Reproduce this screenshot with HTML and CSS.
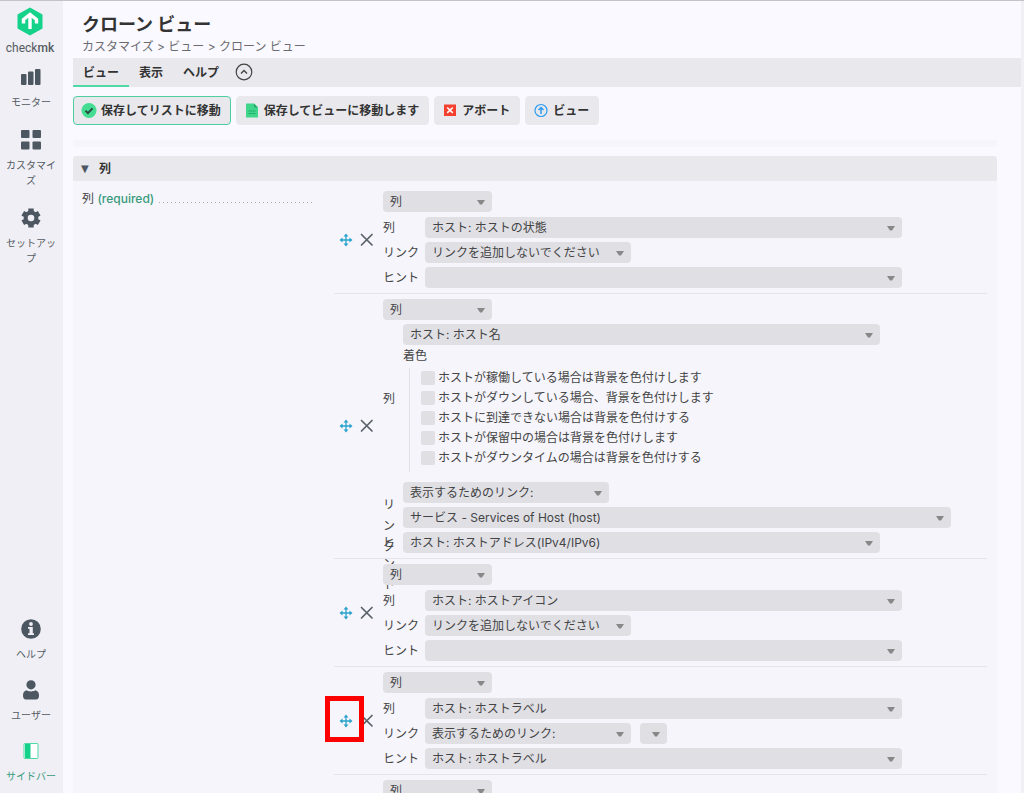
FILE: index.html
```html
<!DOCTYPE html>
<html lang="ja">
<head>
    <meta charset="UTF-8">
    <meta name="viewport" content="width=device-width, initial-scale=1.0">
    <title>クローン ビュー</title>
    <link rel="stylesheet" href="styles.css">
</head>
<body>
    <!-- Shared icons -->
    <svg class="icon-defs" aria-hidden="true">
        <symbol id="icon-move" viewBox="0 0 14 14">
            <path d="M7 2v10M2 7h10" stroke="#28a2cc" stroke-width="1.3" fill="none"/>
            <path d="M7 .5l2.4 3H4.6zM7 13.5l2.4-3H4.6zM.5 7l3-2.4v4.8zM13.500 7l-3-2.400v4.800z" fill="#28a2cc"/>
        </symbol>
        <symbol id="icon-close" viewBox="0 0 14 14">
            <path d="M1.500 1.500l10.500 10.500M12 1.500l-10.500 10.500" stroke="#5a6068" stroke-width="1.700" stroke-linecap="round" fill="none"/>
        </symbol>
    </svg>

    <div class="page">
        <!-- Side navigation -->
        <nav class="sidebar">
            <a href="#" class="logo">
                <svg width="26" height="29" viewBox="0 0 26 29">
                    <path d="M13 .5l12.500 7v14L13 28.500.5 21.500v-14z" fill="#15d28b"/>
                    <path d="M13 22V8M6.500 16.500v-4L13 7.500l6.500 5v4" fill="none" stroke="#fff" stroke-width="3.400"/>
                </svg>
                <span>check<b>mk</b></span>
            </a>
            <div class="nav-group">
                <a href="#" class="nav-item">
                    <svg width="20" height="20" viewBox="0 0 20 20" fill="#4d5761">
                        <rect x="0" y="7" width="5.500" height="11" rx="1"/>
                        <rect x="7" y="4.500" width="5.500" height="13.500" rx="1"/>
                        <rect x="14" y="2" width="5.500" height="16" rx="1"/>
                    </svg>
                    モニター
                </a>
                <a href="#" class="nav-item">
                    <svg width="20" height="20" viewBox="0 0 20 20" fill="#4d5761">
                        <rect x="0" y="0" width="8.500" height="8" rx="1"/>
                        <rect x="11.500" y="0" width="8.500" height="8" rx="1"/>
                        <rect x="0" y="11.500" width="8.500" height="8" rx="1"/>
                        <rect x="11.500" y="11.500" width="8.500" height="8" rx="1"/>
                    </svg>
                    カスタマイズ
                </a>
                <a href="#" class="nav-item">
                    <svg width="20" height="20" viewBox="0 0 20 20">
                        <g stroke="#4d5761" stroke-width="5.400" stroke-linejoin="round">
                            <path d="M10 .5v19M1.800 5.250l16.400 9.500M18.200 5.250l-16.400 9.500"/>
                        </g>
                        <circle cx="10" cy="10" r="7.400" fill="#4d5761"/>
                        <circle cx="10" cy="10" r="3.300" fill="#efeff5"/>
                    </svg>
                    セットアップ
                </a>
            </div>
            <div class="nav-group nav-bottom">
                <a href="#" class="nav-item">
                    <svg width="20" height="20" viewBox="0 0 20 20">
                        <circle cx="10" cy="10" r="9.800" fill="#4d5761"/>
                        <circle cx="10" cy="5" r="1.900" fill="#efeff5"/>
                        <path d="M7 8h4.800v6.200H13V16H7v-1.800h1.500V9.800H7z" fill="#efeff5"/>
                    </svg>
                    ヘルプ
                </a>
                <a href="#" class="nav-item">
                    <svg width="20" height="20" viewBox="0 0 20 20" fill="#4d5761">
                        <circle cx="10" cy="4.800" r="4.600"/>
                        <path d="M5.500 10.200c2.500 1.600 6.500 1.600 9 0 2.300.5 3.500 2.500 3.500 5.300 0 2.500-1 3.900-3 3.900H5c-2 0-3-1.400-3-3.900 0-2.800 1.200-4.800 3.500-5.300z"/>
                    </svg>
                    ユーザー
                </a>
                <a href="#" class="nav-item active">
                    <svg width="20" height="20" viewBox="0 0 20 20">
                        <rect x="3" y="2.500" width="14" height="15" rx="1" fill="#fff" stroke="#4fd9a4"/>
                        <path d="M4 3h5.500v14H4z" fill="#15d28b"/>
                    </svg>
                    サイドバー
                </a>
            </div>
        </nav>

        <main class="main">
            <header class="page-header">
                <h1>クローン ビュー</h1>
                <div class="breadcrumb"><a href="#">カスタマイズ</a> &gt; <a href="#">ビュー</a> &gt; <a href="#">クローン ビュー</a></div>
            </header>

            <div class="menu-bar">
                <button type="button" class="menu-tab selected">ビュー</button>
                <button type="button" class="menu-tab">表示</button>
                <button type="button" class="menu-tab">ヘルプ</button>
                <button type="button" class="menu-toggle" aria-label="Toggle">
                    <svg width="18" height="18" viewBox="0 0 18 18" fill="none" stroke="#444">
                        <circle cx="9" cy="9" r="7.800" stroke-width="1.200"/>
                        <path d="M6 10.500l3-3 3 3" stroke-width="1.400"/>
                    </svg>
                </button>
            </div>

            <div class="actions">
                <button type="button" class="action primary">
                    <svg width="16" height="16" viewBox="0 0 16 16">
                        <circle cx="8" cy="7.500" r="7.500" fill="#44dc92"/>
                        <path d="M4.500 7.700l2.400 2.400 4.600-4.800" fill="none" stroke="#24463c" stroke-width="1.900"/>
                    </svg>
                    保存してリストに移動
                </button>
                <button type="button" class="action">
                    <svg width="16" height="16" viewBox="0 0 16 16">
                        <path d="M2 .5h8l4 4v10H2z" fill="#3fd68c"/>
                        <path d="M10 .5v4h4z" fill="#1fae6b"/>
                        <path d="M4.500 8h7M4.500 10.500h7" stroke="#1fae6b"/>
                    </svg>
                    保存してビューに移動します
                </button>
                <button type="button" class="action">
                    <svg width="16" height="16" viewBox="0 0 16 16">
                        <rect x="2" y="1.500" width="12" height="11.500" fill="#f4402f"/>
                        <path d="M5.200 4.500l5.600 5.400M10.800 4.500l-5.600 5.400" stroke="#fff" stroke-width="1.500"/>
                    </svg>
                    アボート
                </button>
                <button type="button" class="action">
                    <svg width="16" height="16" viewBox="0 0 16 16" fill="none" stroke="#2f9df0">
                        <circle cx="8" cy="7.500" r="6" stroke-width="1.200"/>
                        <path d="M8 11V5M5.500 7L8 4.500 10.500 7" stroke-width="1.500"/>
                    </svg>
                    ビュー
                </button>
            </div>

            <div class="section-end"></div>

            <section class="section">
                <h2><span class="fold">▼</span>列</h2>
                <div class="section-body">
                    <div class="legend">
                        <span>列 <b>(required)</b></span>
                        <span class="dots"></span>
                    </div>

                    <ul class="columns">
                        <li class="column">
                            <div class="handles">
                                <button type="button" aria-label="Move"><svg width="14" height="14"><use href="#icon-move"/></svg></button>
                                <button type="button" aria-label="Delete"><svg width="14" height="14"><use href="#icon-close"/></svg></button>
                            </div>
                            <div class="fields">
                                <select class="short" aria-label="タイプ"><option>列</option></select>
                                <div class="grid">
                                    <label for="c1-col">列</label>
                                    <select id="c1-col" class="long"><option>ホスト: ホストの状態</option></select>
                                    <label for="c1-link">リンク</label>
                                    <select id="c1-link" class="medium"><option>リンクを追加しないでください</option></select>
                                    <label for="c1-hint">ヒント</label>
                                    <select id="c1-hint" class="long"><option></option></select>
                                </div>
                            </div>
                        </li>

                        <li class="column">
                            <div class="handles">
                                <button type="button" aria-label="Move"><svg width="14" height="14"><use href="#icon-move"/></svg></button>
                                <button type="button" aria-label="Delete"><svg width="14" height="14"><use href="#icon-close"/></svg></button>
                            </div>
                            <div class="fields">
                                <select class="short" aria-label="タイプ"><option>列</option></select>
                                <div class="grid narrow">
                                    <label for="c2-col">列</label>
                                    <div>
                                        <select id="c2-col" class="long"><option>ホスト: ホスト名</option></select>
                                        <div class="caption">着色</div>
                                        <div class="checks">
                                            <label><input type="checkbox">ホストが稼働している場合は背景を色付けします</label>
                                            <label><input type="checkbox">ホストがダウンしている場合、背景を色付けします</label>
                                            <label><input type="checkbox">ホストに到達できない場合は背景を色付けする</label>
                                            <label><input type="checkbox">ホストが保留中の場合は背景を色付けします</label>
                                            <label><input type="checkbox">ホストがダウンタイムの場合は背景を色付けする</label>
                                        </div>
                                    </div>
                                    <label for="c2-link" class="stacked centered">リンク</label>
                                    <div class="pair">
                                        <select id="c2-link" class="medium"><option>表示するためのリンク:</option></select>
                                        <select class="wide" aria-label="リンク先"><option>サービス - Services of Host (host)</option></select>
                                    </div>
                                    <label for="c2-hint" class="stacked">ヒント</label>
                                    <select id="c2-hint" class="long"><option>ホスト: ホストアドレス(IPv4/IPv6)</option></select>
                                </div>
                            </div>
                        </li>

                        <li class="column">
                            <div class="handles">
                                <button type="button" aria-label="Move"><svg width="14" height="14"><use href="#icon-move"/></svg></button>
                                <button type="button" aria-label="Delete"><svg width="14" height="14"><use href="#icon-close"/></svg></button>
                            </div>
                            <div class="fields">
                                <select class="short" aria-label="タイプ"><option>列</option></select>
                                <div class="grid">
                                    <label for="c3-col">列</label>
                                    <select id="c3-col" class="long"><option>ホスト: ホストアイコン</option></select>
                                    <label for="c3-link">リンク</label>
                                    <select id="c3-link" class="medium"><option>リンクを追加しないでください</option></select>
                                    <label for="c3-hint">ヒント</label>
                                    <select id="c3-hint" class="long"><option></option></select>
                                </div>
                            </div>
                        </li>

                        <li class="column">
                            <div class="handles">
                                <button type="button" class="marked" aria-label="Move"><svg width="14" height="14"><use href="#icon-move"/></svg></button>
                                <button type="button" aria-label="Delete"><svg width="14" height="14"><use href="#icon-close"/></svg></button>
                            </div>
                            <div class="fields">
                                <select class="short" aria-label="タイプ"><option>列</option></select>
                                <div class="grid">
                                    <label for="c4-col">列</label>
                                    <select id="c4-col" class="long"><option>ホスト: ホストラベル</option></select>
                                    <label for="c4-link">リンク</label>
                                    <div class="inline">
                                        <select id="c4-link" class="medium"><option>表示するためのリンク:</option></select>
                                        <select class="empty" aria-label="リンク先"><option></option></select>
                                    </div>
                                    <label for="c4-hint">ヒント</label>
                                    <select id="c4-hint" class="long"><option>ホスト: ホストラベル</option></select>
                                </div>
                            </div>
                        </li>

                        <li class="column">
                            <div class="handles"></div>
                            <div class="fields">
                                <select class="short" aria-label="タイプ"><option>列</option></select>
                            </div>
                        </li>
                    </ul>
                </div>
            </section>
        </main>
    </div>
</body>
</html>
```
FILE: styles.css
```css
/* Basic reset */
* {
    margin: 0;
    padding: 0;
    box-sizing: border-box;
}

body {
    height: 100vh;
    overflow: hidden;
    background-color: #f9f9ff;
    color: #444;
    font-family: Inter, "Noto Sans CJK JP", sans-serif;
    font-size: 12px;
    line-height: 21px;
}

a {
    color: inherit;
    text-decoration: none;
}

button, select {
    border: none;
    color: inherit;
    font: inherit;
}

svg {
    display: block;
    flex: none;
}

.icon-defs {
    position: absolute;
    width: 0;
    height: 0;
}

.page {
    display: flex;
    height: 100vh;
    border-top: 1px solid #c4c4c8;
}

/* Side navigation */
.sidebar {
    display: flex;
    flex-direction: column;
    flex: none;
    width: 63px;
    padding: 6px 5px 9px 4px;
    background-color: #efeff5;
    color: #555b62;
}

.logo {
    display: flex;
    flex-direction: column;
    align-items: center;
    gap: 2px;
    padding-right: 2px;
    margin-bottom: 9px;
    font-family: Roboto, sans-serif;
    font-size: 12px;
    line-height: 20px;
}

.logo b {
    font-weight: 500;
}

.nav-group {
    display: flex;
    flex-direction: column;
    gap: 20px;
}

.nav-bottom {
    gap: 18px;
    margin-top: auto;
}

.nav-item {
    display: flex;
    flex-direction: column;
    align-items: center;
    gap: 8px;
    font-size: 10px;
    line-height: 15px;
    text-align: center;
}

.nav-item.active {
    color: #3a9a7c;
}

/* Main area */
.main {
    flex: 1;
    min-width: 0;
    padding-left: 10px;
    border-right: 3px solid #f0f0f5;
    overflow: hidden;
}

.page-header {
    padding: 10px 9px 0;
    height: 57px;
}

h1 {
    font-size: 18px;
    line-height: 27px;
    color: #333;
}

.breadcrumb {
    line-height: 18px;
    color: #6c6c70;
}

.menu-bar {
    display: flex;
    height: 29px;
    background-color: #e8e8ed;
}

.menu-tab {
    padding: 1px 10px 0;
    background: none;
    border-bottom: 2px solid transparent;
    font-weight: bold;
    color: #333;
}

.menu-tab.selected {
    border-color: #4fd9a4;
}

.menu-toggle {
    padding: 0 6px 1px;
    background: none;
}

/* Action buttons */
.actions {
    display: flex;
    gap: 5px;
    margin: 9px 0 15px;
}

.action {
    display: flex;
    align-items: center;
    gap: 4px;
    height: 29px;
    padding: 0 9px 0 7px;
    border: 1px solid #e8e8ed;
    border-radius: 4px;
    background-color: #e8e8ed;
    font-weight: bold;
    color: #333;
}

.action.primary {
    border-color: #4fcf9f;
}

.section-end {
    height: 7px;
    margin: 0 24px 9px 0;
    border-radius: 0 0 4px 4px;
    background-color: #f5f5fb;
}

/* Form section */
.section {
    margin-right: 24px;
    background-color: #f5f5fb;
}

h2 {
    display: flex;
    gap: 9px;
    padding: 0 8px;
    border-radius: 4px 4px 0 0;
    background-color: #e8e8ed;
    font-size: 12px;
    line-height: 25px;
    color: #333;
}

.fold {
    width: 9px;
    font-family: "DejaVu Sans", sans-serif;
    font-size: 10px;
    font-weight: normal;
    color: #4d5761;
}

.section-body {
    display: flex;
    gap: 19px;
    padding: 5px 10px 0 9px;
}

.legend {
    display: flex;
    flex: none;
    align-items: flex-start;
    gap: 5px;
    width: 233px;
    padding-top: 2px;
}

.legend b {
    font-weight: 500;
    color: #3a9a7c;
}

.dots {
    flex: 1;
    height: 15px;
    background: repeating-linear-gradient(90deg, #aaa 0 1px, transparent 1px 4px) bottom / 100% 1px no-repeat;
}

/* List of columns */
.columns {
    display: flex;
    flex: 1;
    flex-direction: column;
    list-style: none;
}

.column {
    display: flex;
    padding: 5px 0;
    border-bottom: 1px solid #e4e4e9;
}

.handles {
    display: flex;
    align-items: center;
    gap: 7px;
    width: 49px;
    padding-left: 5px;
}

.handles button {
    position: relative;
    background: none;
}

/* Red frame around the drag handle */
.marked::after {
    content: '';
    position: absolute;
    z-index: 1;
    inset: -18px -11px -14px -14px;
    border: 5px solid #f00;
}

.fields > select {
    margin-bottom: 5px;
}

.grid {
    display: grid;
    grid-template-columns: 42px 1fr;
    row-gap: 4px;
    align-items: center;
}

.grid.narrow {
    grid-template-columns: 20px 1fr;
}

.fields > .narrow {
    margin-top: -1px;
}

/* One character per line, running over into the next row */
.stacked {
    align-self: start;
    width: 13px;
    height: 21px;
    overflow-wrap: anywhere;
}

.stacked.centered {
    padding-top: 18px;
}

.pair {
    display: flex;
    flex-direction: column;
    gap: 4px;
    padding-top: 6px;
}

.inline {
    display: flex;
    gap: 9px;
}

.caption {
    line-height: 22px;
}

.checks {
    margin: 1px 0 0 6px;
    padding: 0 0 4px 11px;
    border-left: 1px solid #e0e0e5;
}

.checks label {
    display: flex;
    align-items: center;
    gap: 3px;
    line-height: 20px;
}

/* Form controls */
select {
    display: block;
    height: 21px;
    padding: 0 20px 0 7px;
    border-radius: 4px;
    appearance: none;
    background: #dfdfe4 url("data:image/svg+xml,%3Csvg xmlns='http://www.w3.org/2000/svg' width='8' height='5'%3E%3Cpath d='M0 0h8L5 4.500H3z' fill='%23888'/%3E%3C/svg%3E") no-repeat right 7px top 9px;
}

.short {
    width: 109px;
}

.medium {
    width: 206px;
}

.long {
    width: 477px;
}

.wide {
    width: 548px;
}

.empty {
    width: 27px;
}

input[type="checkbox"] {
    width: 14px;
    height: 14px;
    border-radius: 2px;
    appearance: none;
    background-color: #dfdfe4;
}
```
